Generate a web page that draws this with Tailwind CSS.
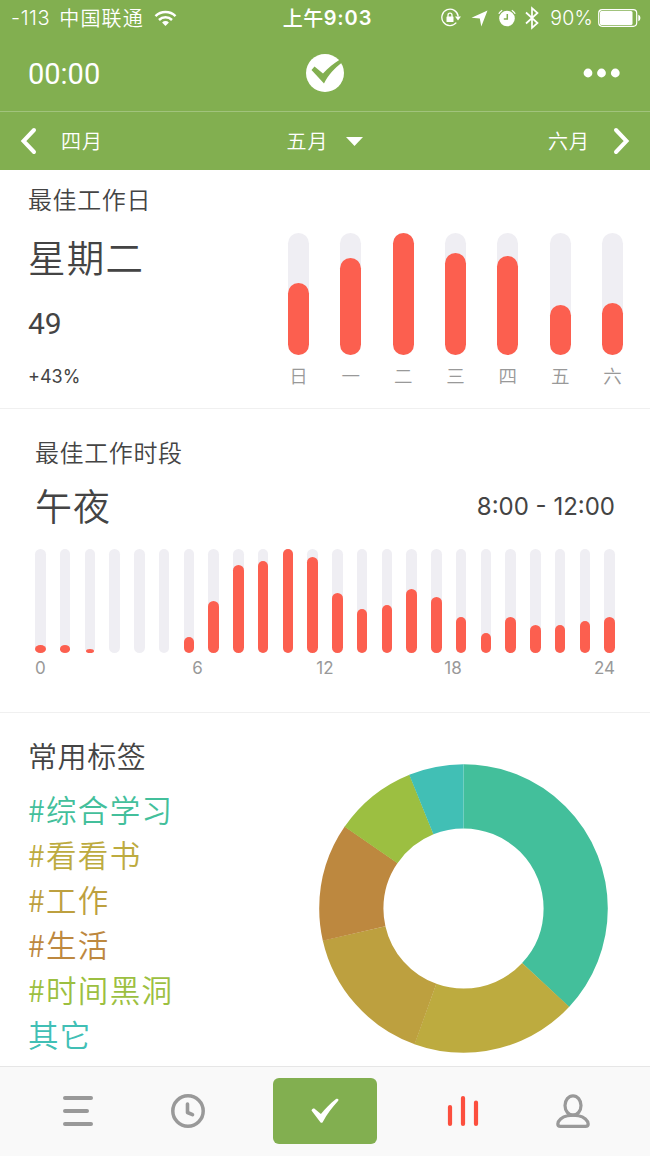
<!DOCTYPE html>
<html lang="zh-CN">
<head>
  <meta charset="UTF-8">
  <meta name="viewport" content="width=device-width, initial-scale=1.0">
  <title>统计</title>
  <script src="https://cdn.jsdelivr.net/npm/@tailwindcss/browser@4"></script>
</head>
<body class="w-[650px] h-[1156px] overflow-hidden flex flex-col bg-white text-[#444] font-['Noto_Sans_CJK_SC',sans-serif] font-[350]">

  <!-- Header -->
  <header class="h-[170px] shrink-0 flex flex-col bg-[#82af50] text-white">

    <!-- Status bar -->
    <div class="h-9 grid grid-cols-[1fr_auto_1fr] items-center pl-[11px] pr-[9px]">
      <div class="flex items-center leading-9">
        <span class="font-['Inter',sans-serif] text-[20px] tracking-[0.6px]">-113</span>
        <span class="ml-[9px] text-[20px] tracking-[1.1px]">中国联通</span>
        <svg class="ml-2.5" width="23" height="17" viewBox="0 0 23 17" fill="none" stroke="#fff" stroke-width="2.5">
          <path d="M1.5 6.2a14.3 14.3 0 0 1 20 0"/>
          <path d="M5 10a9.3 9.3 0 0 1 13 0"/>
          <path d="M11.500 16l-3.400-3.600a4.900 4.900 0 0 1 6.800 0z" fill="#fff" stroke="none"/>
        </svg>
      </div>
      <div class="flex items-center pl-[3px] leading-9 font-medium">
        <span class="text-[20px] tracking-[0.5px]">上午</span>
        <span class="font-['Inter',sans-serif] text-[20px] font-semibold tracking-[0.9px]">9:03</span>
      </div>
      <div class="flex items-center justify-end">
        <svg width="20" height="20" viewBox="0 0 20 20" fill="none" stroke="#fff" stroke-width="1.3">
          <path d="M15.300 14.700A8.200 8.200 0 1 1 17.200 8.500"/>
          <path d="M14 8.500h6l-3 4z" fill="#fff" stroke="none"/>
          <rect x="5.500" y="8.500" width="7" height="5.500" rx=".6" fill="#fff" stroke="none"/>
          <path d="M7 9V7.200a2 2 0 0 1 4 0V9"/>
        </svg>
        <svg class="ml-2.5" width="17" height="17" viewBox="0 0 17 17" fill="#fff">
          <path d="M16.500.5L10.300 16.500 8.800 8.500.5 7.800z"/>
        </svg>
        <svg class="ml-2.5" width="18" height="18" viewBox="0 0 18 18" fill="none" stroke="#fff">
          <circle cx="9" cy="9.500" r="7.800" fill="#fff" stroke="none"/>
          <path d="M.8 4.800A9 9 0 0 1 4.200 1.200M13.800 1.200a9 9 0 0 1 3.400 3.600" stroke-width="1.300"/>
          <path d="M9.300 5v5H5.800" stroke="#82af50" stroke-width="1.500"/>
        </svg>
        <svg class="ml-[9px]" width="14" height="24" viewBox="0 0 14 24" fill="none" stroke="#fff" stroke-width="1.700">
          <path d="M1 6.500l11.500 10.500L7 21.800V2.200l5.500 4.800L1 17.500"/>
        </svg>
        <span class="ml-[11px] font-['Inter',sans-serif] text-[19.5px] leading-9 tracking-[0.2px]">90%</span>
        <svg class="ml-[5px]" width="43" height="18" viewBox="0 0 43 18">
          <rect x=".7" y=".7" width="38" height="16.600" rx="3.500" fill="none" stroke="#fff" stroke-width="1.200"/>
          <rect x="2" y="2" width="32.500" height="14" rx="1.500" fill="#fff"/>
          <path d="M40.300 5.800c2.800 1 2.800 5.400 0 6.400z" fill="#fff"/>
        </svg>
      </div>
    </div>

    <!-- Title bar -->
    <div class="h-[76px] grid grid-cols-3 items-center px-7 pb-0.5 border-b border-white/25">
      <span class="pt-[3px] font-['Roboto',sans-serif] font-normal text-[29px] leading-none">00:00</span>
      <svg class="justify-self-center" width="40" height="40" viewBox="0 0 40 40">
        <circle cx="20" cy="20" r="19" fill="#fff"/>
        <path d="M6.500 17l3-3.500 8.500 7C23 15 29 10 35 6.500l2 3C29.500 15 23 22.500 19 30.500z" fill="#82af50"/>
      </svg>
      <svg class="justify-self-end mr-px" width="38" height="10" viewBox="0 0 38 10" fill="#fff">
        <circle cx="5" cy="5" r="4.400"/><circle cx="18.500" cy="5" r="4.400"/><circle cx="32.300" cy="5" r="4.400"/>
      </svg>
    </div>

    <!-- Month switcher -->
    <div class="h-[58px] grid grid-cols-3 items-center px-5 text-[20px] leading-7">
      <div class="flex items-center">
        <svg width="18" height="28" viewBox="0 0 18 28" fill="none" stroke="#fff" stroke-width="4" stroke-linecap="round"><path d="M14 3L3.500 14 14 25"/></svg>
        <span class="ml-[23px] tracking-[1px]">四月</span>
      </div>
      <div class="flex items-center justify-center">
        <span class="tracking-[1px]">五月</span>
        <svg class="ml-[18px]" width="17" height="9" viewBox="0 0 17 9" fill="#fff"><path d="M0 0h17L8.500 9z"/></svg>
      </div>
      <div class="flex items-center justify-end">
        <span class="mr-[22px] tracking-[1px]">六月</span>
        <svg width="18" height="28" viewBox="0 0 18 28" fill="none" stroke="#fff" stroke-width="4" stroke-linecap="round"><path d="M4 3l10.500 11L4 25"/></svg>
      </div>
    </div>
  </header>

  <!-- Best weekday -->
  <section class="h-[239px] shrink-0 flex justify-between pl-7 pr-[27px] border-b border-[#f0f0f0]">
    <div class="flex flex-col">
      <h2 class="mt-[11px] text-[24px] leading-9 tracking-[0.6px]">最佳工作日</h2>
      <p class="mt-[13px] text-[37.5px] leading-[52px] tracking-[1.2px]">星期二</p>
      <p class="mt-6 font-['Roboto',sans-serif] font-normal text-[30px] leading-9">49</p>
      <p class="mt-[21px] font-['Inter',sans-serif] font-normal text-[18px] leading-7">+43%</p>
    </div>
    <div class="w-[335px] pt-[63px] flex justify-between text-[18.5px] text-[#999]">
      <div class="w-[21px] flex flex-col items-center"><div class="w-full h-[122px] flex items-end rounded-full bg-[#efeef3]"><div class="w-full rounded-full bg-[#fc5f4f]" style="height:72px"></div></div><span class="mt-1.5 leading-7">日</span></div>
      <div class="w-[21px] flex flex-col items-center"><div class="w-full h-[122px] flex items-end rounded-full bg-[#efeef3]"><div class="w-full rounded-full bg-[#fc5f4f]" style="height:97px"></div></div><span class="mt-1.5 leading-7">一</span></div>
      <div class="w-[21px] flex flex-col items-center"><div class="w-full h-[122px] flex items-end rounded-full bg-[#efeef3]"><div class="w-full rounded-full bg-[#fc5f4f]" style="height:122px"></div></div><span class="mt-1.5 leading-7">二</span></div>
      <div class="w-[21px] flex flex-col items-center"><div class="w-full h-[122px] flex items-end rounded-full bg-[#efeef3]"><div class="w-full rounded-full bg-[#fc5f4f]" style="height:102px"></div></div><span class="mt-1.5 leading-7">三</span></div>
      <div class="w-[21px] flex flex-col items-center"><div class="w-full h-[122px] flex items-end rounded-full bg-[#efeef3]"><div class="w-full rounded-full bg-[#fc5f4f]" style="height:99px"></div></div><span class="mt-1.5 leading-7">四</span></div>
      <div class="w-[21px] flex flex-col items-center"><div class="w-full h-[122px] flex items-end rounded-full bg-[#efeef3]"><div class="w-full rounded-full bg-[#fc5f4f]" style="height:50px"></div></div><span class="mt-1.5 leading-7">五</span></div>
      <div class="w-[21px] flex flex-col items-center"><div class="w-full h-[122px] flex items-end rounded-full bg-[#efeef3]"><div class="w-full rounded-full bg-[#fc5f4f]" style="height:52px"></div></div><span class="mt-1.5 leading-7">六</span></div>
    </div>
  </section>

  <!-- Best hours -->
  <section class="h-[304px] shrink-0 flex flex-col px-[35px] border-b border-[#f0f0f0]">
    <h2 class="mt-[25px] text-[24px] leading-9 tracking-[0.6px]">最佳工作时段</h2>
    <div class="mt-[9px] h-[52px] flex items-center justify-between">
      <p class="text-[37px] leading-[52px] tracking-[1px]">午夜</p>
      <p class="pt-[3px] font-['Inter',sans-serif] font-normal text-[24px] leading-[49px]">8:00 - 12:00</p>
    </div>
    <div class="mt-[17.5px] h-[104px] flex justify-between">
      <div class="w-[10.5px] h-full flex items-end rounded-full bg-[#efeef3]"><div class="w-full rounded-[50%] bg-[#fc5f4f]" style="height:8px"></div></div>
      <div class="w-[10.5px] h-full flex items-end rounded-full bg-[#efeef3]"><div class="w-full rounded-[50%] bg-[#fc5f4f]" style="height:8px"></div></div>
      <div class="w-[10.5px] h-full flex items-end justify-center rounded-full bg-[#efeef3]"><div class="w-2 rounded-[50%] bg-[#fc5f4f]" style="height:4px"></div></div>
      <div class="w-[10.5px] h-full rounded-full bg-[#efeef3]"></div>
      <div class="w-[10.5px] h-full rounded-full bg-[#efeef3]"></div>
      <div class="w-[10.5px] h-full rounded-full bg-[#efeef3]"></div>
      <div class="w-[10.5px] h-full flex items-end rounded-full bg-[#efeef3]"><div class="w-full rounded-full bg-[#fc5f4f]" style="height:16px"></div></div>
      <div class="w-[10.5px] h-full flex items-end rounded-full bg-[#efeef3]"><div class="w-full rounded-full bg-[#fc5f4f]" style="height:52px"></div></div>
      <div class="w-[10.5px] h-full flex items-end rounded-full bg-[#efeef3]"><div class="w-full rounded-full bg-[#fc5f4f]" style="height:88px"></div></div>
      <div class="w-[10.5px] h-full flex items-end rounded-full bg-[#efeef3]"><div class="w-full rounded-full bg-[#fc5f4f]" style="height:92px"></div></div>
      <div class="w-[10.5px] h-full flex items-end rounded-full bg-[#efeef3]"><div class="w-full rounded-full bg-[#fc5f4f]" style="height:104px"></div></div>
      <div class="w-[10.5px] h-full flex items-end rounded-full bg-[#efeef3]"><div class="w-full rounded-full bg-[#fc5f4f]" style="height:96px"></div></div>
      <div class="w-[10.5px] h-full flex items-end rounded-full bg-[#efeef3]"><div class="w-full rounded-full bg-[#fc5f4f]" style="height:60px"></div></div>
      <div class="w-[10.5px] h-full flex items-end rounded-full bg-[#efeef3]"><div class="w-full rounded-full bg-[#fc5f4f]" style="height:44px"></div></div>
      <div class="w-[10.5px] h-full flex items-end rounded-full bg-[#efeef3]"><div class="w-full rounded-full bg-[#fc5f4f]" style="height:48px"></div></div>
      <div class="w-[10.5px] h-full flex items-end rounded-full bg-[#efeef3]"><div class="w-full rounded-full bg-[#fc5f4f]" style="height:64px"></div></div>
      <div class="w-[10.5px] h-full flex items-end rounded-full bg-[#efeef3]"><div class="w-full rounded-full bg-[#fc5f4f]" style="height:56px"></div></div>
      <div class="w-[10.5px] h-full flex items-end rounded-full bg-[#efeef3]"><div class="w-full rounded-full bg-[#fc5f4f]" style="height:36px"></div></div>
      <div class="w-[10.5px] h-full flex items-end rounded-full bg-[#efeef3]"><div class="w-full rounded-full bg-[#fc5f4f]" style="height:20px"></div></div>
      <div class="w-[10.5px] h-full flex items-end rounded-full bg-[#efeef3]"><div class="w-full rounded-full bg-[#fc5f4f]" style="height:36px"></div></div>
      <div class="w-[10.5px] h-full flex items-end rounded-full bg-[#efeef3]"><div class="w-full rounded-full bg-[#fc5f4f]" style="height:28px"></div></div>
      <div class="w-[10.5px] h-full flex items-end rounded-full bg-[#efeef3]"><div class="w-full rounded-full bg-[#fc5f4f]" style="height:28px"></div></div>
      <div class="w-[10.5px] h-full flex items-end rounded-full bg-[#efeef3]"><div class="w-full rounded-full bg-[#fc5f4f]" style="height:32px"></div></div>
      <div class="w-[10.5px] h-full flex items-end rounded-full bg-[#efeef3]"><div class="w-full rounded-full bg-[#fc5f4f]" style="height:36px"></div></div>
    </div>
    <div class="mt-[3.5px] grid grid-cols-[99px_127px_128px_128px_1fr] font-['Inter',sans-serif] font-normal text-[17px] leading-6 text-[#999]">
      <span>0</span>
      <span class="text-center">6</span>
      <span class="text-center">12</span>
      <span class="text-center">18</span>
      <span class="text-right">24</span>
    </div>
  </section>

  <!-- Common tags -->
  <section class="h-[353px] shrink-0 flex justify-between pl-7 pr-[42px]">
    <div>
      <h2 class="mt-5 text-[29px] leading-[44px] tracking-[0.6px]">常用标签</h2>
      <ul class="mt-[10px] text-[30.5px] leading-[45px] tracking-[1.3px]">
        <li class="text-[#43bf9b]">#综合学习</li>
        <li class="text-[#bdab3f]">#看看书</li>
        <li class="text-[#bda03f]">#工作</li>
        <li class="text-[#bd883f]">#生活</li>
        <li class="text-[#9cbf41]">#时间黑洞</li>
        <li class="text-[#41bfb5]">其它</li>
      </ul>
    </div>
    <!-- Each slice is a dash of a 360 unit circle -->
    <svg class="mt-[50.500px]" width="289" height="289" viewBox="-144.500 -144.500 289 289" fill="none" stroke-width="64.200">
      <g transform="rotate(-90)">
        <circle r="112.200" pathLength="360" stroke="#43bf9b" stroke-dasharray="133 227"/>
        <circle r="112.200" pathLength="360" stroke="#bdab3f" stroke-dasharray="67 293" stroke-dashoffset="-132.900"/>
        <circle r="112.200" pathLength="360" stroke="#bda03f" stroke-dasharray="57.400 302.600" stroke-dashoffset="-199.800"/>
        <circle r="112.200" pathLength="360" stroke="#bd883f" stroke-dasharray="47.500 312.500" stroke-dashoffset="-257.100"/>
        <circle r="112.200" pathLength="360" stroke="#9cbf41" stroke-dasharray="33.500 326.500" stroke-dashoffset="-304.500"/>
        <circle r="112.200" pathLength="360" stroke="#41bfb5" stroke-dasharray="22.100 337.900" stroke-dashoffset="-337.900"/>
      </g>
    </svg>
  </section>

  <!-- Tab bar -->
  <nav class="h-[90px] shrink-0 flex items-center pl-[60px] pb-0.5 bg-[#f9f9f9] border-t border-[#e6e6e6]">
    <svg width="36" height="36" viewBox="0 0 36 36" fill="none" stroke="#999" stroke-width="4" stroke-linecap="round">
      <path d="M5 5h26M5 18h22M5 31h26"/>
    </svg>
    <svg class="ml-[74px]" width="36" height="36" viewBox="0 0 36 36" fill="none" stroke="#999" stroke-width="3.500" stroke-linecap="round" stroke-linejoin="round">
      <circle cx="18" cy="18" r="15.200"/>
      <path d="M17.500 11v8.500l5 2.200" stroke-width="3.600"/>
    </svg>
    <div class="ml-[67px] w-[104px] h-[66px] flex items-center justify-center rounded-md bg-[#82af50]">
      <svg width="30" height="28" viewBox="0 0 30 28" fill="#fff">
        <path d="M1.500 13.500c.8-1.800 2.200-2.400 3.400-1.400l6 5C15.500 11.500 20 6.500 26 2c1.800-1 3.400.4 2 2C22 10.500 17 17 12.800 25c-.6 1-1.700 1.200-2.400.2z"/>
      </svg>
    </div>
    <svg class="ml-[68px]" width="36" height="36" viewBox="0 0 36 36" fill="none" stroke="#fc4f3e" stroke-width="4.200" stroke-linecap="round">
      <path d="M5 14v17M18 5v26M31 9.500V31"/>
    </svg>
    <svg class="ml-[74px]" width="36" height="36" viewBox="0 0 36 36" fill="none" stroke="#999" stroke-width="3.200">
      <ellipse cx="18" cy="12.500" rx="8" ry="9.700"/>
      <path d="M12.500 22.800C7 23.800 2.800 27.500 2.800 31c0 1.700 1 2.400 2.700 2.400h25c1.700 0 2.700-.7 2.700-2.400 0-3.500-4.200-7.200-9.700-8.200-3-.8-8-.8-11 0z"/>
    </svg>
  </nav>

</body>
</html>
